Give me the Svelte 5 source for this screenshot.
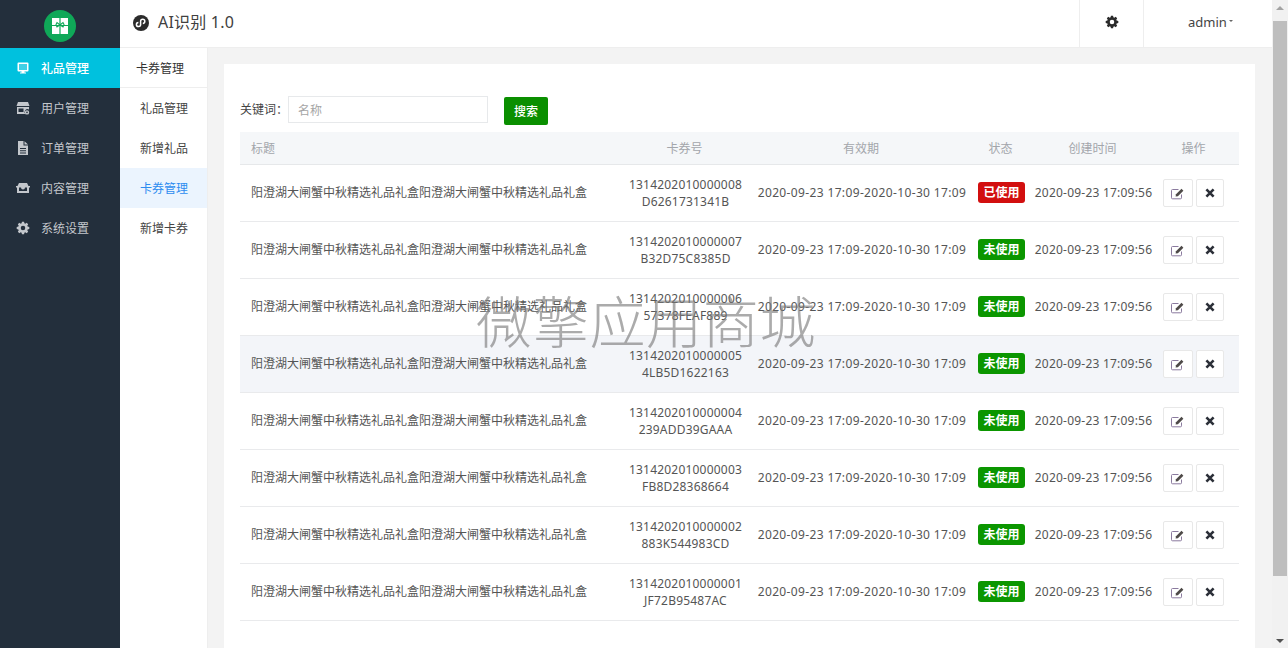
<script>
  const side = [
    { label: '礼品管理', icon: 'monitor', active: true },
    { label: '用户管理', icon: 'store' },
    { label: '订单管理', icon: 'file' },
    { label: '内容管理', icon: 'box' },
    { label: '系统设置', icon: 'gear' }
  ];
  const sub = ['礼品管理', '新增礼品', '卡券管理', '新增卡券'];
  const title = '阳澄湖大闸蟹中秋精选礼品礼盒阳澄湖大闸蟹中秋精选礼品礼盒';
  const rows = [
    ['1314202010000008', 'D6261731341B', true],
    ['1314202010000007', 'B32D75C8385D', false],
    ['1314202010000006', '57378FEAF889', false],
    ['1314202010000005', '4LB5D1622163', false],
    ['1314202010000004', '239ADD39GAAA', false],
    ['1314202010000003', 'FB8D28368664', false],
    ['1314202010000002', '883K544983CD', false],
    ['1314202010000001', 'JF72B95487AC', false]
  ];
  const gear = 'M6.800.8h2.400l.4 1.900 1 .4 1.600-1 1.700 1.700-1 1.600.4 1 1.900.4v2.400l-1.900.4-.4 1 1 1.600-1.700 1.700-1.600-1-1 .4-.4 1.900H6.800l-.4-1.900-1-.4-1.600 1-1.700-1.700 1-1.600-.4-1-1.900-.4V6.800l1.900-.4.4-1-1-1.600 1.700-1.700 1.600 1 1-.4zM8 5.400a2.600 2.600 0 1 0 0 5.200 2.600 2.600 0 0 0 0-5.200z';
</script>

<div class="page">
  <aside class="side">
    <div class="logo">
      <svg width="32" height="32" viewBox="0 0 32 32">
        <circle cx="16" cy="16" r="16" fill="#0fa858" />
        <rect x="8" y="8" width="16" height="16" fill="#fff" />
        <path d="M16 8v16M8 15.500h16" stroke="#0fa858" stroke-width="1.200" />
        <path d="M16 15l-3-2.500-1 2 1 2.500zM16 15l3-2.500 1 2-1 2.500z" fill="none" stroke="#0fa858" stroke-width="1.100" />
      </svg>
    </div>
    <nav>
      {#each side as item}
        <div class="side-item" class:on={item.active}>
          <svg class="side-icon" width="14" height="14" viewBox="0 0 14 14" fill="currentColor">
            {#if item.icon === 'monitor'}
              <path fill-rule="evenodd" d="M2.500 1.500h9a1 1 0 0 1 1 1v7a1 1 0 0 1-1 1H8.500v1h1.500v1H4v-1h1.500v-1h-3a1 1 0 0 1-1-1v-7a1 1 0 0 1 1-1zM3 3v6h8V3z" />
              <rect x="3" y="3" width="8" height="6" fill="#fff" opacity=".25" />
            {:else if item.icon === 'store'}
              <path d="M2 1h10l1.500 4h-13z" />
              <path fill-rule="evenodd" d="M1 6h12v2.500a3 3 0 0 0-3.800 4.500H1zM2.500 7.500V11h5V7.500z" />
              <path fill-rule="evenodd" d="M11 9.200a2.200 2.200 0 1 0 0 4.400 2.200 2.200 0 0 0 0-4.400zm0 1.400a.8.8 0 1 1 0 1.600.8.8 0 0 1 0-1.600z" />
            {:else if item.icon === 'file'}
              <path fill-rule="evenodd" d="M2 0h5.500v4.500H12V14H2zM4 7v1h6V7zm0 2.200v1h6v-1zm0 2.200v1h6v-1zM8.500 0.300 12 3.500H8.500z" />
            {:else if item.icon === 'box'}
              <path fill-rule="evenodd" d="M3 2h8l1.500 3H14v1.500h-1V12H1V6.500H0V5h1.500zM3 6.500V10h8V6.500H9a2 2 0 0 1-4 0z" />
            {:else}
              <path fill-rule="evenodd" transform="scale(.875)" d={gear} />
            {/if}
          </svg>
          <span>{item.label}</span>
        </div>
      {/each}
    </nav>
  </aside>

  <div class="right">
    <header class="top">
      <div class="brand">
        <svg width="16" height="16" viewBox="0 0 16 16">
          <circle cx="8" cy="8" r="8" fill="#2b2b2b" />
          <path d="M5.400 7.400A2.100 2.100 0 1 0 7.600 9.400V6.200A2.100 2.100 0 1 1 9.800 8.400" fill="none" stroke="#fff" stroke-width="1.500" />
        </svg>
        <span class="app-name">AI识别 1.0</span>
      </div>
      <div class="tool">
        <svg width="14" height="14" viewBox="0 0 16 16" fill="#2b2b2b"><path fill-rule="evenodd" d={gear} /></svg>
      </div>
      <div class="user">admin<i class="caret"></i></div>
    </header>

    <div class="body">
      <div class="sub">
        <div class="sub-title">卡券管理</div>
        {#each sub as s, i}
          <div class="sub-item" class:cur={i === 2}>{s}</div>
        {/each}
      </div>

      <main class="main">
        <section class="card">
          <div class="search">
            <label class="kw" for="kw">关键词：</label>
            <input id="kw" placeholder="名称" />
            <button class="go">搜索</button>
          </div>
          <table>
            <colgroup>
              <col class="c1" /><col class="c2" /><col class="c3" /><col class="c4" /><col class="c5" /><col class="c6" />
            </colgroup>
            <thead>
              <tr>
                <th class="left">标题</th>
                <th class="mid">卡券号</th>
                <th class="mid">有效期</th>
                <th class="mid">状态</th>
                <th class="mid">创建时间</th>
                <th class="ops-h">操作</th>
              </tr>
            </thead>
            <tbody>
              {#each rows as r, i}
                <tr class:hover={i === 3}>
                  <td class="left up1">{title}</td>
                  <td class="code">{r[0]}<br />{r[1]}</td>
                  <td class="range up1">2020-09-23 17:09-2020-10-30 17:09</td>
                  <td class="up1"><span class="badge" class:used={r[2]}>{r[2] ? '已使用' : '未使用'}</span></td>
                  <td class="stamp up1">2020-09-23 17:09:56</td>
                  <td class="ops">
                    <div class="btns">
                      <button class="act edit" aria-label="编辑">
                        <svg width="14" height="13" viewBox="0 0 14 13">
                          <path d="M10.500 7.500v3.300a1 1 0 0 1-1 1H1.500a1 1 0 0 1-1-1V3.500a1 1 0 0 1 1-1h6" fill="none" stroke="#8a7a9e" stroke-width="1" />
                          <path d="M5 7.300l5.500-5.500 1.900 1.900-5.500 5.500-2.300.4z" fill="#4e4a48" />
                        </svg>
                      </button>
                      <button class="act del" aria-label="删除">
                        <svg width="10" height="10" viewBox="0 0 10 10">
                          <path d="M1.400 1.400l7.200 7.200M8.600 1.400L1.400 8.600" stroke="#2b2f38" stroke-width="2.600" />
                        </svg>
                      </button>
                    </div>
                  </td>
                </tr>
              {/each}
            </tbody>
          </table>
        </section>
      </main>
    </div>
    <div class="mark">微擎应用商城</div>
  </div>

  <div class="bar">
    <i class="up"></i>
    <div class="thumb"></div>
    <i class="down"></i>
  </div>
</div>

<style>
  :global(body) { margin: 0; background: #f3f3f3; }
  .page {
    display: flex;
    width: 1288px;
    height: 648px;
    overflow: hidden;
    font-family: "Noto Sans", "Noto Sans CJK SC", sans-serif;
    font-size: 12px;
    color: #555;
  }
  .side { width: 120px; flex: none; background: #232f3c; color: #c3c7cc; }
  .logo { height: 48px; display: flex; justify-content: center; padding-top: 10px; box-sizing: border-box; }
  .side-item { height: 40px; display: flex; align-items: center; padding-left: 16px; gap: 11px; }
  .side-item.on { background: #00c1de; color: #fff; font-weight: 500; }
  .side-icon { flex: none; }
  .right { position: relative; flex: 1; min-width: 0; display: flex; flex-direction: column; }
  .top {
    height: 48px; box-sizing: border-box; flex: none; background: #fff;
    border-bottom: 1px solid #eee; display: flex; align-items: stretch;
  }
  .brand { flex: 1; display: flex; align-items: center; gap: 9px; padding: 0 0 2px 13px; }
  .app-name { font-size: 16px; color: #404040; letter-spacing: .2px; margin-top: -3px; }
  .tool { width: 64px; box-sizing: border-box; border-left: 1px solid #eee; display: flex; align-items: center; justify-content: center; padding-bottom: 4px; }
  .user { width: 129px; box-sizing: border-box; border-left: 1px solid #eee; display: flex; align-items: center; padding: 0 0 4px 44px; font-size: 13px; color: #444; }
  .caret { width: 0; height: 0; margin: -2px 0 0 2px; border: 2.500px solid transparent; border-top-color: #666; border-bottom: 0; }
  .body { flex: 1; display: flex; min-height: 0; }
  .sub { width: 88px; flex: none; box-sizing: border-box; background: #fff; border-right: 1px solid #eee; }
  .sub-title { height: 40px; box-sizing: border-box; border-bottom: 1px solid #eee; display: flex; align-items: center; padding-left: 16px; color: #333; }
  .sub-item { height: 40px; display: flex; align-items: center; padding-left: 20px; color: #444; }
  .sub-item.cur { background: #ebf4fe; color: #2d8cf0; }
  .main { flex: 1; padding: 16px 17px 0 16px; min-width: 0; }
  .card { background: #fff; height: 100%; box-sizing: border-box; padding: 32px 16px 0; }
  .search { height: 36px; display: flex; align-items: flex-start; }
  .kw { width: 48px; line-height: 27px; color: #444; }
  input {
    width: 200px; height: 27px; box-sizing: border-box; border: 1px solid #e7e9eb; padding: 2px 9px 0;
    font: inherit; outline: none; background: #fff;
  }
  input::placeholder { color: #a5a5a5; }
  .go {
    margin: 1px 0 0 16px; width: 44px; height: 28px; padding: 0; border: 0; border-radius: 2px;
    background: #0a8f00; color: #fff; font: inherit; font-weight: 500;
  }
  table { width: 999px; table-layout: fixed; border-collapse: collapse; }
  .c1 { width: 379px; } .c2 { width: 133px; } .c3 { width: 220px; } .c4 { width: 59px; } .c5 { width: 125px; } .c6 { width: 83px; }
  th {
    height: 32px; padding: 0; font-weight: 400; color: #a3a6ab; text-align: center;
    background: #f5f7f9; border-bottom: 1px solid #e6e8ea;
  }
  th.mid { padding-right: 2px; }
  td { height: 56px; padding: 0; text-align: center; border-bottom: 1px solid #e9eaec; }
  td.up1 { padding-bottom: 2px; height: 54px; }
  .left { text-align: left; padding-left: 11px; }
  td.left { padding-left: 11px; }
  .ops-h, .ops { padding-right: 8px; }
  .code { line-height: 17px; letter-spacing: .2px; }
  .range { letter-spacing: .36px; white-space: nowrap; }
  .stamp { letter-spacing: .22px; white-space: nowrap; }
  tr.hover td { background: #f3f5f9; }
  .badge {
    display: inline-block; width: 47px; height: 21px; line-height: 21px; border-radius: 3px;
    background: #0b9600; color: #fff; font-weight: 700; text-align: center; vertical-align: middle;
  }
  .badge.used { background: #d20f0f; }
  .btns { display: flex; justify-content: center; gap: 3px; }
  .act {
    height: 28px; padding: 0; background: #fff; border: 1px solid #e8e8e8; border-radius: 2px;
    display: flex; align-items: center; justify-content: center;
  }
  .edit { width: 30px; }
  .del { width: 28px; }
  .mark {
    position: absolute; left: 356px; top: 289px;
    font-size: 56px; line-height: 60px; font-weight: 300; letter-spacing: .7px; color: rgba(120, 120, 120, .62);
    font-family: "Noto Sans CJK SC", sans-serif; white-space: nowrap;
  }
  .bar { width: 16px; flex: none; background: #f1f1f1; position: relative; display: flex; flex-direction: column; align-items: center; }
  .thumb { width: 14px; height: 555px; background: #bebebe; margin-top: 11px; }
  .up, .down { width: 0; height: 0; border: 4px solid transparent; }
  .up { border-bottom: 4px solid #a3a3a3; border-top: 0; margin-top: 6px; }
  .down { border-top: 4px solid #505050; border-bottom: 0; margin-top: 63px; }
</style>
